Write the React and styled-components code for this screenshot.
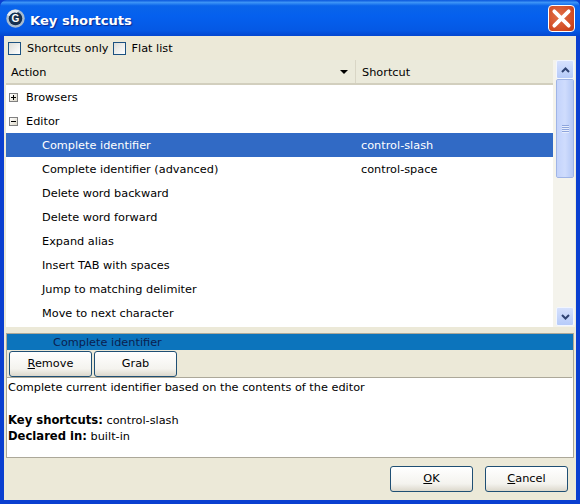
import React from "react";
import styled, { createGlobalStyle } from "styled-components";

const Global = createGlobalStyle`
  html, body { margin: 0; padding: 0; background: #0a3fd0; }
  * { box-sizing: border-box; }
`;

const Win = styled.div`
  width: 580px; height: 504px; display: flex; flex-direction: column; overflow: hidden;
  font: 11.3px/16px "DejaVu Sans", sans-serif; color: #000;
  background: #0a3fd0; border-radius: 7px 7px 0 0;
`;
const TitleBar = styled.div`
  height: 36px; flex: none; display: flex; align-items: center; padding: 0 5px 0 6px; gap: 5px;
  background: linear-gradient(180deg, #0a56dc 0%, #3c93f6 7%, #0a64ea 16%, #0560ee 45%, #0558e4 85%, #0447d0 100%);
`;
const Title = styled.div`
  flex: 1; padding-top: 6px; color: #fff; font-weight: 700; font-size: 13.1px; line-height: 18px; text-shadow: 1px 1px 1px #0a2a90;
`;
const Close = styled.div`
  width: 27px; height: 27px; border: 1px solid #fff; border-radius: 4px; display: flex; align-items: center; justify-content: center;
  background: radial-gradient(circle at 40% 40%, #e2714a, #d04a22 70%, #bb3a14);
`;
const Body = styled.div`
  flex: 1; margin: 0 4px 4px; background: #ece9d8; display: flex; flex-direction: column; min-height: 0;
`;
const CheckRow = styled.div`
  height: 24px; flex: none; display: flex; align-items: center; padding: 1px 0 0 4px;
`;
const CheckItem = styled.label`
  display: flex; align-items: center; gap: 6px; margin-right: 4px;
`;
const Box = styled.span`
  width: 13px; height: 13px; border: 1px solid #1c5180; background: linear-gradient(135deg, #dcdcd7, #ffffff);
`;
const TreeArea = styled.div`
  height: 267px; flex: none; margin-left: 2px; display: flex;
`;
const TreeMain = styled.div`
  width: 547px; display: flex; flex-direction: column;
`;
const Header = styled.div`
  height: 25px; flex: none; display: flex; align-items: center; background: #ebeadb; border-bottom: 2px solid #d2cfbe;
`;
const HeadAction = styled.div`
  width: 350px; height: 100%; padding: 3px 0 0 5px; display: flex; align-items: center; justify-content: space-between;
  border-right: 1px solid #d9d6c6;
`;
const SortArrow = styled.span`
  width: 0; height: 0; margin: -3px 7px 0 0; border-left: 4px solid transparent; border-right: 4px solid transparent; border-top: 4px solid #000;
`;
const HeadShortcut = styled.div`
  padding: 3px 0 0 6px;
`;
const Rows = styled.div`
  flex: 1; background: #fff; overflow: hidden;
`;
const Row = styled.div`
  height: 24px; display: flex; align-items: center; padding-top: 2px;
  background: ${p => (p.$selected ? "#316ac5" : "transparent")};
  color: ${p => (p.$selected ? "#fff" : "#000")};
`;
const RowLabel = styled.div`
  width: 355px; flex: none; display: flex; align-items: center; gap: 8px; padding-left: ${p => (p.$child ? "36px" : "3px")};
`;
const Expander = styled.span`
  width: 9px; height: 9px; margin-top: -2px; border: 1px solid #808080; background: linear-gradient(135deg, #fff, #ddd8c8); position: relative;
  &::before { content: ""; position: absolute; left: 1px; top: 3px; width: 5px; height: 1px; background: #000; }
  &::after { content: ${p => (p.$open ? "none" : '""')}; position: absolute; left: 3px; top: 1px; width: 1px; height: 5px; background: #000; }
`;
const Scrollbar = styled.div`
  width: 22px; flex: none; padding: 0 1px 1px 3px; display: flex; flex-direction: column; background: #f4f3ec;
`;
const ScrollBtn = styled.div`
  height: 19px; flex: none; display: flex; align-items: center; justify-content: center;
  background: linear-gradient(180deg, #d6e1fd, #b6cbf9); border: 1px solid #f2f6ff; border-radius: 2px;
`;
const Thumb = styled.div`
  height: 99px; flex: none; display: flex; align-items: center; justify-content: center;
  background: linear-gradient(90deg, #c3d3fb, #cfdcfd 50%, #b4c8f6); border: 1px solid #f2f6ff; border-radius: 2px; outline: 1px solid #9fb4e6; outline-offset: -1px;
`;
const Track = styled.div`flex: 1;`;
const Grip = styled.div`
  width: 7px; height: 8px;
  background: repeating-linear-gradient(180deg, #8ea5dd 0 1px, #e8eefc 1px 2px);
`;
const Detail = styled.div`
  margin: 6px 0 0 2px; width: 568px; height: 125px; flex: none; display: flex; flex-direction: column;
  border: 1px solid #aca899;
`;
const BlueBar = styled.div`
  height: 16px; flex: none; background: #0c74bc; color: #0a2050; padding-left: 46px; line-height: 17px;
`;
const ButtonRow = styled.div`
  height: 28px; flex: none; display: flex; gap: 2px; align-items: center; padding: 0 0 0 2px; border-bottom: 1px solid #aca899; margin-right: 1px;
`;
const Btn = styled.button`
  width: ${p => p.$w}px; height: ${p => p.$h}px; padding: 0; font: inherit; color: #000;
  border: 1px solid #1f4f74; border-radius: 3px;
  background: linear-gradient(180deg, #ffffff, #f4f3ee 70%, #dcd8cc);
`;
const Description = styled.div`
  flex: 1; background: #fff; padding: 2px 0 0 1px;
`;
const Line = styled.div`
  height: 16px;
`;
const Strong = styled.b`
  font-size: 11.6px;
`;
const Footer = styled.div`
  flex: 1; display: flex; justify-content: flex-end; align-items: flex-start; gap: 12px; padding: 8px 8px 0 0;
`;

const Key = ({ children }) => <u>{children}</u>;

const children = [
  ["Complete identifier", "control-slash", true],
  ["Complete identifier (advanced)", "control-space"],
  ["Delete word backward"],
  ["Delete word forward"],
  ["Expand alias"],
  ["Insert TAB with spaces"],
  ["Jump to matching delimiter"],
  ["Move to next character"],
];

export default function App() {
  return (
    <Win>
      <Global />
      <TitleBar>
        <svg width="19" height="19" viewBox="0 0 19 19">
          <circle cx="9.5" cy="9.5" r="9.2" fill="#a9bccf" />
          <circle cx="9.5" cy="9.5" r="6.8" fill="#16304f" />
          <path d="M1 6 A9 9 0 0 1 13 1.5 L11 4 A6 6 0 0 0 3.5 7 Z" fill="#e4ebf2" />
          <text x="9.5" y="13" fontSize="10" fontWeight="700" textAnchor="middle" fill="#fff" fontFamily="Liberation Sans">G</text>
        </svg>
        <Title>Key shortcuts</Title>
        <Close>
          <svg width="21" height="21" viewBox="0 0 19 19">
            <path d="M3 3 L16 16 M16 3 L3 16" stroke="#fff" strokeWidth="3.4" strokeLinecap="round" />
          </svg>
        </Close>
      </TitleBar>
      <Body>
        <CheckRow>
          <CheckItem><Box />Shortcuts only</CheckItem>
          <CheckItem><Box />Flat list</CheckItem>
        </CheckRow>
        <TreeArea>
          <TreeMain>
            <Header>
              <HeadAction>Action<SortArrow /></HeadAction>
              <HeadShortcut>Shortcut</HeadShortcut>
            </Header>
            <Rows>
              <Row><RowLabel><Expander />Browsers</RowLabel></Row>
              <Row><RowLabel><Expander $open />Editor</RowLabel></Row>
              {children.map(([a, s, sel]) => (
                <Row key={a} $selected={sel}>
                  <RowLabel $child>{a}</RowLabel>
                  <span>{s}</span>
                </Row>
              ))}
            </Rows>
          </TreeMain>
          <Scrollbar>
            <ScrollBtn>
              <svg width="9" height="6" viewBox="0 0 9 6"><path d="M1 5 L4.5 1.5 L8 5" fill="none" stroke="#2f4373" strokeWidth="2" /></svg>
            </ScrollBtn>
            <Thumb><Grip /></Thumb>
            <Track />
            <ScrollBtn>
              <svg width="9" height="6" viewBox="0 0 9 6"><path d="M1 1 L4.5 4.5 L8 1" fill="none" stroke="#2f4373" strokeWidth="2" /></svg>
            </ScrollBtn>
          </Scrollbar>
        </TreeArea>
        <Detail>
          <BlueBar>Complete identifier</BlueBar>
          <ButtonRow>
            <Btn $w={83} $h={26}><Key>R</Key>emove</Btn>
            <Btn $w={83} $h={26}>Grab</Btn>
          </ButtonRow>
          <Description>
            <Line>Complete current identifier based on the contents of the editor</Line>
            <Line />
            <Line><Strong>Key shortcuts:</Strong> control-slash</Line>
            <Line><Strong>Declared in:</Strong> built-in</Line>
          </Description>
        </Detail>
        <Footer>
          <Btn $w={83} $h={26}><Key>O</Key>K</Btn>
          <Btn $w={83} $h={26}><Key>C</Key>ancel</Btn>
        </Footer>
      </Body>
    </Win>
  );
}
